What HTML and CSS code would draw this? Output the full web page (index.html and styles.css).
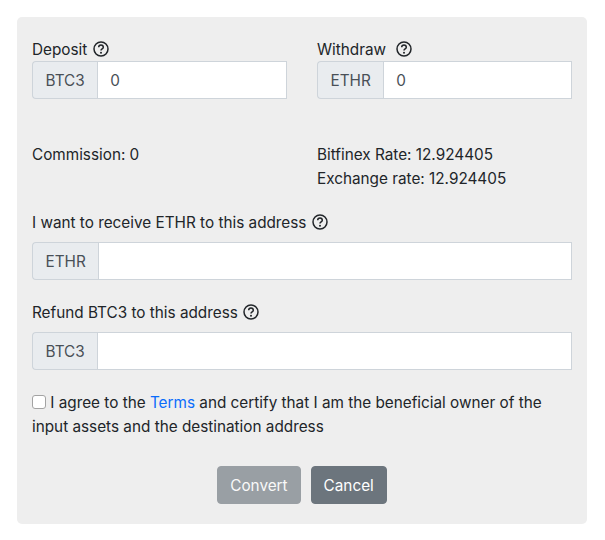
FILE: index.html
```html
<!DOCTYPE html>
<html lang="en">
<head>
  <meta charset="UTF-8">
  <title>Convert</title>
  <link rel="stylesheet" href="styles.css">
</head>
<body>
  <form class="panel">
    <div class="row">
      <div class="col">
        <label class="label">Deposit
          <svg class="help" viewBox="0 0 16 16"><circle cx="8" cy="8" r="7"/><path d="M5.7 6.3a2.3 2.3 0 0 1 4.6 0c0 1.6-2.3 1.6-2.3 3.2"/><circle class="dot" cx="8" cy="11.8" r="1"/></svg>
        </label>
        <div class="input-group">
          <span class="addon">BTC3</span>
          <input class="field" type="text" value="0">
        </div>
      </div>
      <div class="col">
        <label class="label">Withdraw&nbsp;
          <svg class="help" viewBox="0 0 16 16"><circle cx="8" cy="8" r="7"/><path d="M5.7 6.3a2.3 2.3 0 0 1 4.6 0c0 1.6-2.3 1.6-2.3 3.2"/><circle class="dot" cx="8" cy="11.8" r="1"/></svg>
        </label>
        <div class="input-group">
          <span class="addon">ETHR</span>
          <input class="field" type="text" value="0">
        </div>
      </div>
    </div>

    <div class="row rates">
      <div class="col">Commission: 0</div>
      <div class="col">
        <div>Bitfinex Rate: 12.924405</div>
        <div>Exchange rate: 12.924405</div>
      </div>
    </div>

    <div class="address">
      <label class="label spaced">I want to receive ETHR to this address
        <svg class="help" viewBox="0 0 16 16"><circle cx="8" cy="8" r="7"/><path d="M5.7 6.3a2.3 2.3 0 0 1 4.6 0c0 1.6-2.3 1.6-2.3 3.2"/><circle class="dot" cx="8" cy="11.8" r="1"/></svg>
      </label>
      <div class="input-group">
        <span class="addon">ETHR</span>
        <input class="field" type="text">
      </div>
    </div>

    <div class="address">
      <label class="label spaced">Refund BTC3 to this address
        <svg class="help" viewBox="0 0 16 16"><circle cx="8" cy="8" r="7"/><path d="M5.7 6.3a2.3 2.3 0 0 1 4.6 0c0 1.6-2.3 1.6-2.3 3.2"/><circle class="dot" cx="8" cy="11.8" r="1"/></svg>
      </label>
      <div class="input-group">
        <span class="addon">BTC3</span>
        <input class="field" type="text">
      </div>
    </div>

    <p class="terms">
      <input class="check" type="checkbox">
      I agree to the <a href="#">Terms</a> and certify that I am the beneficial owner of the input assets and the destination address
    </p>

    <div class="actions">
      <button class="btn btn-convert" type="button">Convert</button>
      <button class="btn btn-cancel" type="button">Cancel</button>
    </div>
  </form>
</body>
</html>
```

FILE: styles.css
```css
* {
  box-sizing: border-box;
}

body {
  margin: 0;
  padding: 17px 18px 16px 17px;
  background: #fff;
  color: #212529;
  font-family: Inter, Roboto, sans-serif;
  font-size: 15.3px;
  line-height: 24px;
}

.panel {
  background: #eee;
  border-radius: 5px;
  padding: 21px 15px 20px;
}

.row {
  display: flex;
  gap: 30px;
}

.col {
  flex: 1;
  min-width: 0;
}

.label {
  display: block;
  margin-bottom: -1px;
}

.label.spaced {
  margin-bottom: 7px;
}

.help {
  width: 16px;
  height: 16px;
  margin-left: 1px;
  vertical-align: -2px;
  fill: none;
  stroke: #212529;
  stroke-width: 1.5;
}

.help .dot {
  fill: #212529;
  stroke: none;
}

.input-group {
  display: flex;
  height: 38px;
}

.addon {
  display: flex;
  align-items: center;
  padding: 2px 12.5px 0;
  background: #e9ecef;
  border: 1px solid #ced4da;
  border-right: 0;
  border-radius: 4px 0 0 4px;
  color: #495057;
}

.field {
  flex: 1;
  min-width: 0;
  padding: 7px 12px 5px;
  background: #fff;
  border: 1px solid #ced4da;
  border-radius: 0;
  color: #495057;
  font: inherit;
}

.rates {
  margin-top: 44px;
}

.address {
  margin-top: 20px;
}

.address + .address {
  margin-top: 21px;
}

.terms {
  margin: 21px 0 0;
}

.check {
  appearance: none;
  width: 14px;
  height: 14px;
  margin: 0;
  vertical-align: -1px;
  background: #fff;
  border: 1px solid #a3a3a3;
  border-radius: 3px;
}

.terms a {
  color: #0a6cfb;
  text-decoration: none;
}

.actions {
  display: flex;
  justify-content: center;
  gap: 10px;
  margin-top: 27px;
}

.btn {
  height: 38px;
  padding: 2px 12px 0;
  border: 1px solid #6c757d;
  border-radius: 4px;
  background: #6c757d;
  color: #fff;
  font: inherit;
}

.btn-convert {
  opacity: 0.65;
}
```
